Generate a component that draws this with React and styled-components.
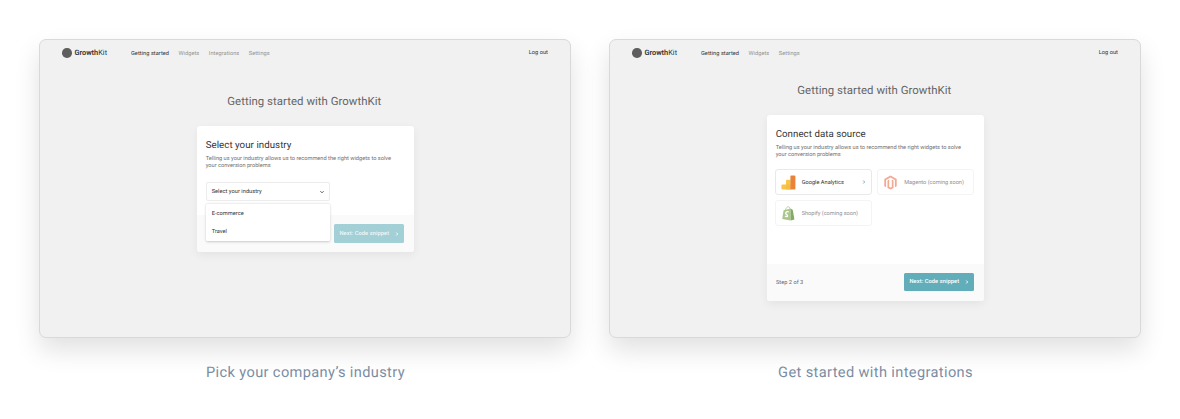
import React from "react";
import styled, { createGlobalStyle } from "styled-components";

const Global = createGlobalStyle`
  *, *::before, *::after { box-sizing: border-box; }
  body {
    margin: 0;
    background: #fff;
    font-family: Roboto, "Liberation Sans", sans-serif;
    text-rendering: geometricPrecision;
    -webkit-font-smoothing: antialiased;
  }
  h1, h2, p, figure, figcaption, ul { margin: 0; padding: 0; font-weight: 400; }
  ul { list-style: none; }
  button { font-family: inherit; text-rendering: inherit; border: 0; padding: 0; }
`;

const Page = styled.main`
  display: flex;
  gap: 38px;
  width: 1180px;
  height: 419px;
  padding: 39px 39px 0;
  overflow: hidden;
`;

const Figure = styled.figure`
  width: 532px;
`;

const Screen = styled.section`
  height: 299px;
  border: 1px solid #d9d9d9;
  border-radius: 7px;
  background: #f1f1f1;
  box-shadow: 0 12px 26px rgba(0, 0, 0, 0.12);
`;

const Caption = styled.figcaption`
  margin-top: 24px;
  padding-left: 1px;
  text-align: center;
  font-size: 14.6px;
  line-height: 20px;
  letter-spacing: 0.37px;
  color: #7b8da3;
`;

const Header = styled.header`
  display: flex;
  align-items: center;
  height: 26px;
  padding: 0 22px;
  font-size: 5.65px;
  line-height: 8px;
  color: #333;
`;

const LogoMark = styled.span`
  width: 9.6px;
  height: 9.6px;
  margin-right: 2.8px;
  border-radius: 50%;
  background: #5e5e5e;
`;

const LogoText = styled.span`
  width: 56.6px;
  padding-top: 0.6px;
  font-size: 7.4px;
  line-height: 10px;
  color: #333;
  b { font-weight: 600; }
`;

const Nav = styled.nav`
  display: flex;
  gap: 9.5px;
  flex: 1;
  padding-top: 1px;
`;

const NavItem = styled.span`
  letter-spacing: 0.04px;
  color: ${(p) => (p.$active ? "#333" : "#949494")};
`;

const LogOut = styled.span`
  letter-spacing: 0.03px;
`;

const Title = styled.h1`
  margin-top: ${(p) => p.$top}px;
  padding-right: 1.4px;
  text-align: center;
  font-size: 11.4px;
  line-height: 14px;
  letter-spacing: 0.04px;
  color: #666;
`;

const Card = styled.article`
  display: flex;
  flex-direction: column;
  width: 217px;
  height: ${(p) => p.$height}px;
  margin: 18px 0 0 156.5px;
  border-radius: 3px;
  background: #fff;
  box-shadow: 0 3px 10px rgba(0, 0, 0, 0.06);
`;

const CardBody = styled.div`
  flex: 1;
  padding: 13px 9px 0 9.2px;
`;

const Heading = styled.h2`
  font-size: 9.7px;
  line-height: 14px;
  letter-spacing: 0.05px;
  color: #333;
`;

const Description = styled.p`
  margin-top: 3px;
  font-size: 5.65px;
  line-height: 6.6px;
  letter-spacing: 0.005px;
  color: #707070;
`;

const CardFooter = styled.footer`
  display: flex;
  align-items: center;
  height: 37px;
  padding: 0 9.5px;
  border-radius: 0 0 3px 3px;
  background: #fafafa;
`;

const Step = styled.span`
  padding-top: 1px;
  font-size: 5.6px;
  letter-spacing: 0.04px;
  color: #666;
`;

const NextButton = styled.button`
  display: flex;
  align-items: center;
  justify-content: space-between;
  width: 70.5px;
  height: 18.5px;
  margin-left: auto;
  padding: 0 5.5px 0 6px;
  border-radius: 1.5px;
  background: ${(p) => (p.$muted ? "#a3cfd6" : "#62adba")};
  color: ${(p) => (p.$muted ? "rgba(255, 255, 255, 0.85)" : "#fff")};
  font-size: 5.7px;
  font-weight: 500;
  letter-spacing: 0.08px;
`;

const SelectArea = styled.div`
  position: relative;
  width: 124px;
  margin-top: 12.6px;
  font-size: 5.65px;
  letter-spacing: 0.04px;
  color: #333;
`;

const SelectBox = styled.div`
  display: flex;
  align-items: center;
  justify-content: space-between;
  height: 19px;
  padding: 1px 5px 0;
  border: 1px solid #ececec;
  border-radius: 2px;
`;

const Menu = styled.ul`
  position: absolute;
  top: 22.2px;
  left: 0;
  width: 124px;
  padding-top: 0.6px;
  border-radius: 1.5px;
  background: #fff;
  box-shadow: 0 0.5px 2.5px rgba(0, 0, 0, 0.2);
`;

const MenuItem = styled.li`
  height: 18.3px;
  padding-left: 6px;
  line-height: 18.5px;
`;

const Sources = styled.div`
  display: grid;
  grid-template-columns: 97px 97px;
  gap: 5px 5.5px;
  margin: 11px 0 0 -1px;
`;

const Source = styled.div`
  display: flex;
  align-items: center;
  height: 26px;
  padding: 0 5px;
  border: 1px solid ${(p) => (p.$enabled ? "#e9e9e9" : "#f4f4f4")};
  border-radius: 3px;
  font-size: 5.6px;
  letter-spacing: ${(p) => (p.$enabled ? 0.02 : 0)}px;
  color: ${(p) => (p.$enabled ? "#333" : "#8f8f8f")};
  svg:first-child { margin-right: 6px; }
  svg:last-child { margin-left: auto; }
`;

const Chevron = ({ color, down }) => (
  <svg width="4" height="4" viewBox="0 0 4 4" fill="none" stroke={color} strokeWidth="0.9">
    <path d={down ? "M0.4 1.2 2 2.8 3.6 1.2" : "M1.2 0.5 2.7 2 1.2 3.5"} />
  </svg>
);

const AnalyticsIcon = () => (
  <svg width="15" height="15" viewBox="0 0 15 15">
    <path d="M0.4 10.5q0-1 1-1H5V5.8q0-1 1-1h3.6v9.7H1.4q-1 0-1-1z" fill="#f8c548" />
    <path d="M5 9.5h4.6v5H5z" fill="#f5bd42" />
    <path d="M9.4 1.4q0-1 1-1h3q1 0 1 1v12.1q0 1-1 1h-4z" fill="#e8833a" />
  </svg>
);

const MagentoIcon = () => (
  <svg width="15" height="15" viewBox="0 0 15 15" fill="#f3a892">
    <path d="M7.5 0.5 13.7 4v7.2l-1.8 1V5L7.5 2.5 3.1 5v7.2l-1.8-1V4z" />
    <path d="M4.5 5.6 6.2 4.6v7.3l1.3.7 1.3-.7V4.6l1.7 1v7.3l-3 1.7-3-1.7z" />
  </svg>
);

const ShopifyIcon = () => (
  <svg width="15" height="15" viewBox="0 0 15 15">
    <path d="M4.5 4.2C4.8 1.9 6.1.8 7.5.8c1 .1 1.5 1.2 1.5 3" fill="none" stroke="#a9c78b" strokeWidth="0.8" />
    <path d="M2.6 4.3 9.7 2.6v11.9L1.2 12.9z" fill="#aac78b" />
    <path d="M9.7 2.6 11.8 4l1.6 9.5-3.7 1z" fill="#86a968" />
    <path
      d="M7.8 5.9C6.2 5.2 4.7 5.9 4.7 7.2c0 1.4 2 1.5 1.9 2.7-.1 1-1.5.9-2.6.1"
      fill="none"
      stroke="#fff"
      strokeWidth="1.3"
    />
  </svg>
);

const SourceName = styled.span`
  padding-top: 1px;
`;

const AppHeader = ({ items }) => (
  <Header>
    <LogoMark />
    <LogoText>
      <b>Growth</b>Kit
    </LogoText>
    <Nav>
      {items.map((item, i) => (
        <NavItem key={item} $active={i === 0}>
          {item}
        </NavItem>
      ))}
    </Nav>
    <LogOut>Log out</LogOut>
  </Header>
);

const Intro = ({ heading }) => (
  <>
    <Heading>{heading}</Heading>
    <Description>
      Telling us your industry allows us to recommend the right widgets to solve
      <br />
      your conversion problems
    </Description>
  </>
);

const Next = ({ muted }) => (
  <NextButton $muted={muted}>
    Next: Code snippet
    <Chevron color="#fff" />
  </NextButton>
);

export default function App() {
  return (
    <>
      <Global />
      <Page>
        <Figure>
          <Screen>
            <AppHeader items={["Getting started", "Widgets", "Integrations", "Settings"]} />
            <Title $top={28}>Getting started with GrowthKit</Title>
            <Card $height={126}>
              <CardBody>
                <Intro heading="Select your industry" />
                <SelectArea>
                  <SelectBox>
                    Select your industry
                    <Chevron color="#444" down />
                  </SelectBox>
                  <Menu>
                    <MenuItem>E-commerce</MenuItem>
                    <MenuItem>Travel</MenuItem>
                  </Menu>
                </SelectArea>
              </CardBody>
              <CardFooter>
                <Next muted />
              </CardFooter>
            </Card>
          </Screen>
          <Caption>Pick your company’s industry</Caption>
        </Figure>
        <Figure>
          <Screen>
            <AppHeader items={["Getting started", "Widgets", "Settings"]} />
            <Title $top={17}>Getting started with GrowthKit</Title>
            <Card $height={185.5}>
              <CardBody>
                <Intro heading="Connect data source" />
                <Sources>
                  <Source $enabled>
                    <AnalyticsIcon />
                    <SourceName>Google Analytics</SourceName>
                    <Chevron color="#62adba" />
                  </Source>
                  <Source>
                    <MagentoIcon />
                    <SourceName>Magento (coming soon)</SourceName>
                  </Source>
                  <Source>
                    <ShopifyIcon />
                    <SourceName>Shopify (coming soon)</SourceName>
                  </Source>
                </Sources>
              </CardBody>
              <CardFooter>
                <Step>Step 2 of 3</Step>
                <Next />
              </CardFooter>
            </Card>
          </Screen>
          <Caption>Get started with integrations</Caption>
        </Figure>
      </Page>
    </>
  );
}
